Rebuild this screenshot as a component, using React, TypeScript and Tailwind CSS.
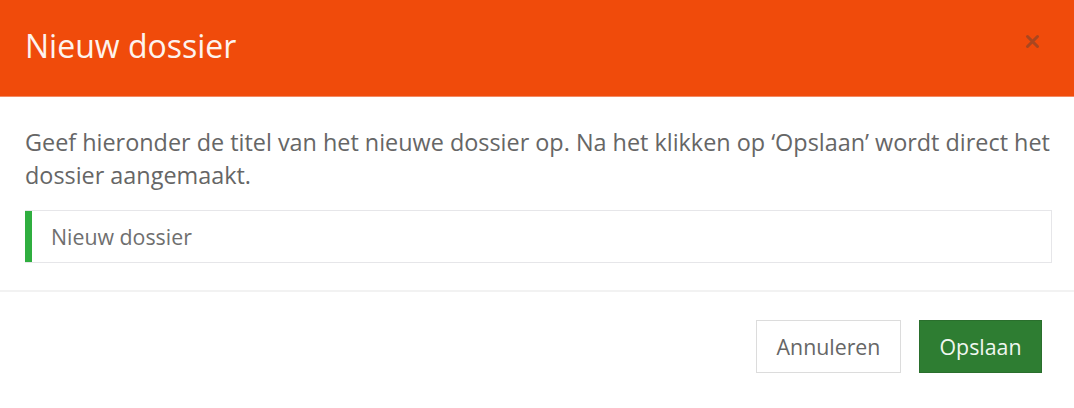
import React from "react";

export default function App() {
  return (
    <div
      className="w-[1074px] h-[408px] bg-white overflow-hidden"
      style={{ fontFamily: '"Open Sans", "Liberation Sans", sans-serif' }}
    >
      <div className="h-[97px] bg-[#f04b0b] border-b border-[#f38a63] flex items-start justify-between pl-[25px] pr-[34px]">
        <h1 className="pt-[24px] text-[32px] leading-[44px] text-[#fdf3ee] font-normal">Nieuw dossier</h1>
        <button className="mt-[34px] w-[15px] h-[15px] flex items-center justify-center text-[#a9461f]" aria-label="Sluiten">
          <svg width="15" height="15" viewBox="0 0 15 15" fill="none" stroke="currentColor" strokeWidth="3" strokeLinecap="round">
            <path d="M2.5 2.5 L12.5 12.5 M12.5 2.5 L2.5 12.5" />
          </svg>
        </button>
      </div>
      <div className="pl-[25px] pr-[22px] pt-[29px] pb-[27px] border-b-2 border-[#f2f2f2]">
        <p className="text-[23.4px] leading-[33px] text-[#666666]">
          Geef hieronder de titel van het nieuwe dossier op. Na het klikken op ‘Opslaan’ wordt direct het dossier aangemaakt.
        </p>
        <div className="mt-[18px] h-[53px] flex border border-[#e6e6e9] border-l-0">
          <div className="w-[7px] bg-[#2fae3f]" />
          <input
            className="flex-1 pl-[19px] text-[21.33px] text-[#6f6f6f] outline-none bg-white"
            defaultValue="Nieuw dossier"
            style={{ fontFamily: '"Open Sans", "Liberation Sans", sans-serif' }}
          />
        </div>
      </div>
      <div className="flex justify-end gap-[18px] pt-[28px] pr-[32px]">
        <button className="w-[145px] h-[53px] border border-[#dcdcdc] bg-white text-[21.33px] text-[#666666]">
          Annuleren
        </button>
        <button className="w-[123px] h-[53px] border border-[#2a6f2d] bg-[#2e7d32] text-[21.33px] text-[#f0f7f0]">
          Opslaan
        </button>
      </div>
    </div>
  );
}
